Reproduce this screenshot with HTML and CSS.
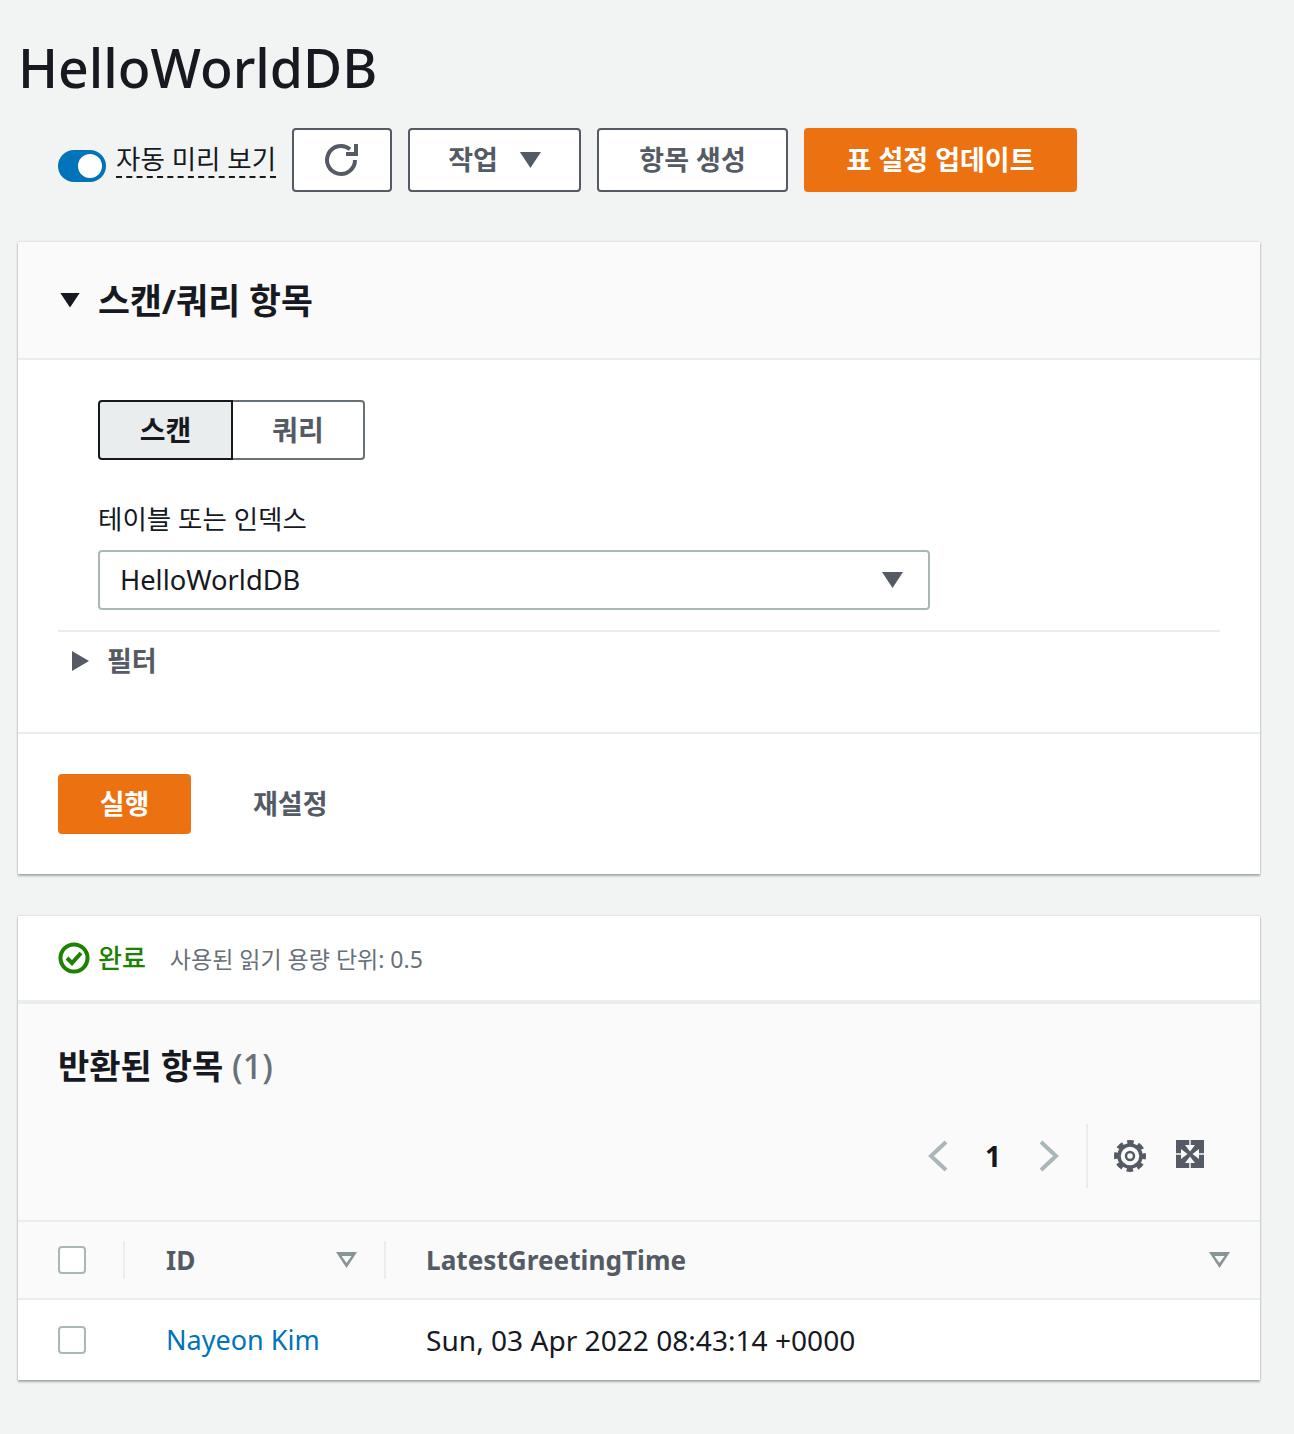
FILE: index.html
```html
<!DOCTYPE html>
<html lang="ko">
<head>
  <meta charset="UTF-8">
  <title>HelloWorldDB</title>
  <link rel="stylesheet" href="styles.css">
</head>
<body>
  <h1 class="page-title">HelloWorldDB</h1>

  <div class="toolbar">
    <div class="toggle-wrap">
      <span class="toggle"><span class="toggle-knob"></span></span>
      <span class="toggle-label">자동 미리 보기</span>
    </div>
    <button class="button icon-button">
      <svg width="36" height="36" viewBox="0 0 36 36" fill="none" stroke="#545b64" stroke-width="4">
        <path d="M31 18a14 14 0 1 1-5-10.700"/>
        <path d="M32 2v10h-10"/>
      </svg>
    </button>
    <button class="button actions-button">작업 <span class="caret"></span></button>
    <button class="button create-button">항목 생성</button>
    <button class="button primary update-button">표 설정 업데이트</button>
  </div>

  <section class="panel">
    <div class="panel-head">
      <span class="caret caret-dark"></span>
      <h2>스캔/쿼리 항목</h2>
    </div>
    <div class="panel-body">
      <div class="segments">
        <div class="segment active">스캔</div>
        <div class="segment">쿼리</div>
      </div>
      <label class="field-label">테이블 또는 인덱스</label>
      <div class="select">
        <span>HelloWorldDB</span>
        <span class="caret"></span>
      </div>
      <div class="filter-row">
        <span class="caret-right"></span>
        <span>필터</span>
      </div>
    </div>
    <div class="panel-foot">
      <button class="button primary run-button">실행</button>
      <button class="link-button">재설정</button>
    </div>
  </section>

  <section class="panel results">
    <div class="status-row">
      <svg width="32" height="32" viewBox="0 0 32 32" fill="none" stroke="#1d8102" stroke-width="4">
        <circle cx="16" cy="16" r="13.500"/>
        <path d="M9 16l5 5 9-10"/>
      </svg>
      <span class="status-ok">완료</span>
      <span class="status-note">사용된 읽기 용량 단위: 0.5</span>
    </div>
    <div class="results-head">
      <h2>반환된 항목 <span class="count">(1)</span></h2>
      <div class="pager">
        <svg width="24" height="34" viewBox="0 0 24 34" fill="none" stroke="#aab7b8" stroke-width="4">
          <path d="M20 3L5 17l15 14"/>
        </svg>
        <span class="page-num">1</span>
        <svg width="24" height="34" viewBox="0 0 24 34" fill="none" stroke="#aab7b8" stroke-width="4">
          <path d="M5 3l15 14L5 31"/>
        </svg>
        <span class="pager-line"></span>
        <svg class="gear" width="32" height="32" viewBox="0 0 32 32" fill="none" stroke="#545b64">
          <circle cx="16" cy="16" r="11" stroke-width="3.500"/>
          <circle cx="16" cy="16" r="14" stroke-width="4" stroke-dasharray="6.500 4.500" stroke-dashoffset="3.250"/>
          <circle cx="16" cy="16" r="4" stroke-width="2.500"/>
        </svg>
        <svg class="expand" width="28" height="28" viewBox="0 0 28 28">
          <rect width="28" height="28" fill="#545b64"/>
          <path d="M14 0v6M14 22v6M0 14h6M22 14h6" stroke="#fafafa" stroke-width="1.500"/>
          <path d="M9 5h10l-5 6.500zM9 23h10l-5-6.500zM5 9v10l6.500-5zM23 9v10l-6.500-5z" fill="#fafafa"/>
        </svg>
      </div>
    </div>
    <div class="table-row table-header">
      <div class="cell-check"><span class="checkbox"></span></div>
      <div class="cell-id">
        <span>ID</span>
        <span class="sort"></span>
      </div>
      <div class="cell-time">
        <span>LatestGreetingTime</span>
        <span class="sort"></span>
      </div>
    </div>
    <div class="table-row table-data">
      <div class="cell-check"><span class="checkbox"></span></div>
      <div class="cell-id"><a class="link">Nayeon Kim</a></div>
      <div class="cell-time">Sun, 03 Apr 2022 08:43:14 +0000</div>
    </div>
  </section>
</body>
</html>
```

FILE: styles.css
```css
* {
  box-sizing: border-box;
}
body {
  margin: 0;
  min-height: 1434px;
  padding: 0 34px 0 18px;
  background-color: #f2f3f3;
  color: #16191f;
  font-family: "Noto Sans", "Noto Sans CJK KR", sans-serif;
  font-size: 28px;
  line-height: 40px;
}
h1, h2 {
  margin: 0;
}
.page-title {
  padding: 36px 0 28px 0;
  font-size: 53.600px;
  line-height: 64px;
  font-weight: 500;
}
.toolbar {
  display: flex;
  align-items: center;
  gap: 16px;
  height: 64px;
  margin-left: 40px;
  margin-bottom: 50px;
}
.toggle-wrap {
  display: flex;
  align-items: center;
  gap: 10px;
}
.toggle {
  display: flex;
  justify-content: flex-end;
  align-items: center;
  width: 48px;
  height: 32px;
  margin-top: 12px;
  padding-right: 4px;
  border-radius: 16px;
  background-color: #0073bb;
}
.toggle-knob {
  width: 24px;
  height: 24px;
  border-radius: 50%;
  background-color: #fff;
}
.toggle-label {
  font-size: 26.500px;
  line-height: 34px;
  border-bottom: 2px dashed #16191f;
}
.button {
  display: flex;
  align-items: center;
  justify-content: center;
  height: 64px;
  border: 2px solid #545b64;
  border-radius: 4px;
  background-color: #fff;
  color: #545b64;
  font: inherit;
  font-size: 27px;
  font-weight: 700;
  padding: 0;
}
.button.primary {
  background-color: #ec7211;
  border-color: #ec7211;
  color: #fff;
}
.icon-button {
  width: 100px;
}
.actions-button {
  width: 173px;
  gap: 22px;
}
.create-button {
  width: 191px;
}
.update-button {
  width: 273px;
}
.caret {
  display: inline-block;
  width: 21px;
  height: 16px;
  background-color: #545b64;
  clip-path: polygon(0 0, 100% 0, 50% 100%);
}
.caret-dark {
  width: 20px;
  height: 15px;
  background-color: #16191f;
}
.caret-right {
  display: inline-block;
  width: 17px;
  height: 20px;
  background-color: #545b64;
  clip-path: polygon(0 0, 100% 50%, 0 100%);
}
.panel {
  background-color: #fff;
  box-shadow: 0 2px 2px rgba(0, 28, 36, 0.3), 0 0 2px rgba(0, 28, 36, 0.2);
}
.panel-head {
  display: flex;
  align-items: center;
  gap: 18px;
  height: 118px;
  padding-left: 42px;
  background-color: #fafafa;
  border-bottom: 2px solid #eaeded;
}
.panel-head h2 {
  margin-top: 2px;
  font-size: 34.700px;
  line-height: 44px;
  font-weight: 700;
}
.panel-body {
  height: 374px;
  padding: 40px 40px 0;
  border-bottom: 2px solid #eaeded;
}
.segments {
  display: flex;
  margin-left: 40px;
}
.segment {
  display: flex;
  align-items: center;
  justify-content: center;
  width: 132px;
  height: 60px;
  border: 2px solid #687078;
  border-left: 0;
  border-radius: 0 4px 4px 0;
  background-color: #fff;
  color: #545b64;
  font-size: 28px;
  font-weight: 700;
}
.segment.active {
  width: 135px;
  border: 2px solid #16191f;
  border-radius: 4px 0 0 4px;
  background-color: #eaeded;
  color: #16191f;
}
.field-label {
  display: block;
  margin: 39px 0 11px 40px;
  font-size: 26.500px;
}
.select {
  display: flex;
  align-items: center;
  justify-content: space-between;
  width: 832px;
  height: 60px;
  margin-left: 40px;
  padding: 0 25px 0 20px;
  border: 2px solid #aab7b8;
  border-radius: 4px;
  font-size: 27.300px;
}
.filter-row {
  display: flex;
  align-items: center;
  gap: 18px;
  height: 60px;
  margin-top: 20px;
  padding-left: 14px;
  border-top: 2px solid #eaeded;
  color: #545b64;
  font-weight: 700;
  font-size: 27px;
}
.panel-foot {
  display: flex;
  align-items: center;
  gap: 62px;
  height: 140px;
  padding-left: 40px;
}
.run-button {
  width: 133px;
  height: 60px;
}
.link-button {
  border: none;
  background: none;
  padding: 0;
  color: #545b64;
  font: inherit;
  font-size: 27px;
  font-weight: 700;
}
.results {
  margin-top: 42px;
}
.status-row {
  display: flex;
  align-items: center;
  height: 88px;
  padding-left: 40px;
  border-bottom: 4px solid #eaeded;
}
.status-ok {
  margin-left: 8px;
  color: #1d8102;
  font-size: 26px;
  font-weight: 500;
}
.status-note {
  margin-left: 24px;
  margin-top: 2px;
  color: #687078;
  font-size: 23px;
}
.results-head {
  height: 218px;
  padding: 40px 40px 0;
  background-color: #fafafa;
  border-bottom: 2px solid #eaeded;
}
.results-head h2 {
  font-size: 34px;
  line-height: 44px;
  font-weight: 700;
}
.count {
  color: #687078;
  font-weight: 500;
}
.pager {
  display: flex;
  align-items: center;
  justify-content: flex-end;
  height: 64px;
  margin-top: 36px;
  padding-right: 16px;
}
.page-num {
  width: 86px;
  text-align: center;
  font-size: 28px;
  font-weight: 700;
}
.pager-line {
  width: 2px;
  height: 64px;
  margin: 0 26px 0 26px;
  background-color: #eaeded;
}
.gear {
  margin-top: -1px;
}
.expand {
  margin-left: 30px;
  margin-top: -4px;
}
.table-row {
  display: flex;
  align-items: center;
}
.table-header {
  height: 78px;
  background-color: #fafafa;
  border-bottom: 2px solid #eaeded;
  color: #545b64;
  font-weight: 700;
  font-size: 26.200px;
}
.table-data {
  height: 80px;
  font-size: 28.100px;
}
.cell-check {
  width: 107px;
  padding-left: 40px;
  display: flex;
  align-items: center;
  height: 38px;
}
.table-header .cell-check,
.table-header .cell-id {
  border-right: 2px solid #eaeded;
}
.cell-id {
  display: flex;
  align-items: center;
  justify-content: space-between;
  width: 261px;
  height: 38px;
  padding: 0 27px 0 41px;
}
.cell-time {
  display: flex;
  align-items: center;
  justify-content: space-between;
  flex: 1;
  padding: 0 30px 0 40px;
}
.checkbox {
  width: 28px;
  height: 28px;
  border: 2px solid #aab7b8;
  border-radius: 4px;
  background-color: #fff;
}
.link {
  color: #0073bb;
  font-size: 27px;
}
.sort {
  position: relative;
  width: 21px;
  height: 16px;
  background-color: #879596;
  clip-path: polygon(0 0, 100% 0, 50% 100%);
}
.sort::after {
  content: "";
  position: absolute;
  left: 5.500px;
  top: 4px;
  width: 10px;
  height: 7px;
  background-color: #fafafa;
  clip-path: polygon(0 0, 100% 0, 50% 100%);
}
```
